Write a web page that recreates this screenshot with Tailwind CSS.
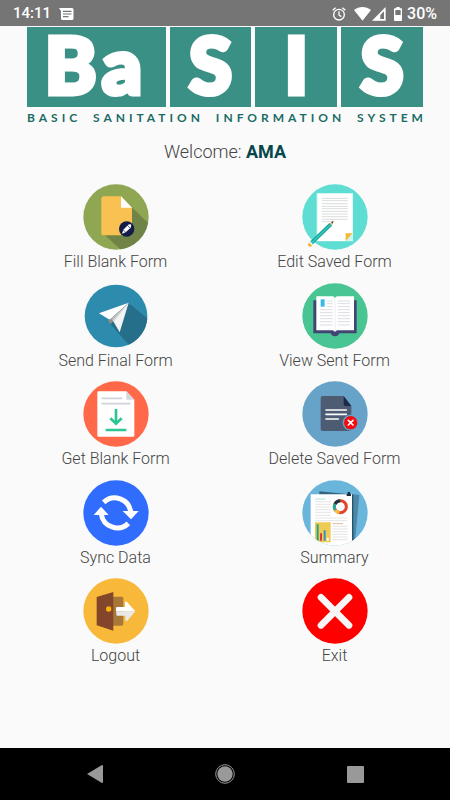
<!DOCTYPE html>
<html lang="en">
<head>
<meta charset="utf-8">
<meta name="viewport" content="width=device-width, initial-scale=1">
<title>BaSIS</title>
<script src="https://cdn.jsdelivr.net/npm/@tailwindcss/browser@4"></script>
</head>
<body class="min-h-screen flex flex-col bg-[#fafafa] font-[Roboto,sans-serif] text-[#444]">
<header class="h-[26px] shrink-0 bg-[#757575] text-white flex items-center justify-between px-[13px] pt-px font-medium">
  <div class="flex items-center gap-2">
    <time class="text-[15px]">14:11</time>
    <svg class="w-[15px] h-3" viewBox="0 0 15 12" aria-label="Message"><path fill="#fff" d="M0 0h13a1.500 1.500 0 0 1 1.500 1.500v9A1.500 1.500 0 0 1 13 12H3.500A1.500 1.500 0 0 1 2 10.500V3z"/><path stroke="#757575" stroke-width="1.200" d="M4 3.300h8.500M4 6h8.500M4 8.700h5.500"/></svg>
  </div>
  <div class="flex items-center">
    <svg class="w-[14px] h-[14px]" viewBox="0 0 42 42" fill="none" stroke="#fff" stroke-width="4" aria-label="Alarm"><circle cx="21" cy="23" r="16"/><path d="M21 13v11l7 5M2 10l9-8M40 10l-9-8"/></svg>
    <svg class="ml-2 w-[17px] h-[14px]" viewBox="0 0 51 42" aria-label="Wi-Fi"><path fill="#fff" d="M0 9C15-3 36-3 51 9L25.500 41z"/></svg>
    <svg class="ml-px w-[14px] h-[14px]" viewBox="0 0 42 42" aria-label="Signal"><path fill="#fff" fill-rule="evenodd" d="M41 0v41H0zM36 13L24 25v11h12z"/><path fill="#fff" d="M8 36L25 20v20H8z"/></svg>
    <svg class="ml-2 w-2 h-[14px]" viewBox="0 0 24 42" aria-label="Battery"><path fill="#fff" fill-rule="evenodd" d="M7 0h10v4h5a2 2 0 0 1 2 2v34a2 2 0 0 1-2 2H2a2 2 0 0 1-2-2V6a2 2 0 0 1 2-2h5zM4 9v15h16V9z"/></svg>
    <span class="ml-[5px] text-base">30%</span>
  </div>
</header>

<main class="flex-1 flex flex-col">
  <h1 class="mx-[27px] mt-px font-[Lato,sans-serif]">
    <span class="flex gap-1 text-center text-[78px] leading-[74px] font-black text-white [-webkit-text-stroke:5px_white] [stroke-linejoin:round]">
      <span class="h-20 grow-[139] basis-0 bg-[#3b9086] tracking-[6px]">Ba</span>
      <span class="h-20 grow-[82] basis-0 bg-[#3b9086]">S</span>
      <span class="h-20 grow-[82] basis-0 bg-[#3b9086]">I</span>
      <span class="h-20 grow-[82] basis-0 bg-[#3b9086]">S</span>
    </span>
    <span class="flex justify-between -mr-1 mt-[3px] text-xs leading-4 font-bold tracking-[4px] text-[#1b6b66]">
      <span>BASIC</span> <span>SANITATION</span> <span>INFORMATION</span> <span>SYSTEM</span>
    </span>
  </h1>
  <p class="mt-[14px] text-center text-lg leading-6 font-light">Welcome: <b class="font-bold text-[#06474c]">AMA</b></p>

  <nav class="flex-1 mt-5 pb-[71px] px-[6px] grid grid-cols-2 grid-rows-5 text-base leading-6 font-light">
    <button class="flex flex-col items-center">
      <svg class="size-[66px]" viewBox="98 29 198 198"><circle cx="197" cy="128" r="98" fill="#8fa653"/><path fill="#6f8446" d="M163 182L244 99l49 46a98 98 0 0 1-83 80z"/><path fill="#f9c151" d="M161 66h51l33 34v83h-84a8 8 0 0 1-8-8V74a8 8 0 0 1 8-8z"/><path fill="#fff" d="M212 66l33 34h-33z"/><circle cx="229" cy="164" r="23" fill="#131b49"/><path fill="#fff" d="M215 178l4-12 15-15 6-2 3 4-2 7-15 14z"/><path stroke="#131b49" stroke-width="2" d="M231 153l8 8M219 167l6 6"/></svg>
      Fill Blank Form
    </button>
    <button class="flex flex-col items-center">
      <svg class="size-[66px]" viewBox="94 27 198 198"><circle cx="193" cy="126" r="98" fill="#5eddd3"/><path fill="#d3f5f2" d="M138 54h109v145H138z"/><path fill="#fff" d="M141 57h104v117l-21 24h-83z"/><path fill="#f7c33c" d="M225 175h20l-20 23z"/><path fill="#e0a92e" d="M225 198v-23l21 0z" opacity=".35"/><path stroke="#dadcdd" stroke-width="3" d="M153 70h78M153 77h78M153 86h78M153 94h78M153 101h78M153 109h78M153 117h78M153 125h78M153 133h78M153 140h34"/><path fill="#e8bd7e" d="M175 146l14-9-6 17z"/><path fill="#333" d="M182 142l7-5-4 9z"/><path fill="#14a69c" d="M117 201l59-57 8 8-59 57z"/><path fill="#44cfc4" d="M120 204l59-57 2 2-59 58z"/><path fill="#e9f5f3" d="M115 203l4-4 8 9-4 4z"/><path fill="#f4b52e" d="M112 207l4-4 8 9-4 3q-8 1-8-8z"/></svg>
      Edit Saved Form
    </button>
    <button class="flex flex-col items-center">
      <svg class="size-[66px]" viewBox="98 24 198 198"><circle cx="197" cy="123" r="94" fill="#2d8bad"/><path fill="#256f8b" d="M234 83l57 47a94 94 0 0 1-56 79L172 138z"/><path fill="#fff" d="M146 115l89-32-57 51z"/><path fill="#b9b9b9" d="M178 134l57-51-47 54-8 9-7-10z"/><path fill="#8c8c8c" d="M172 134l13-1 3 4-6 11z"/><path fill="#f4f4f4" d="M235 83l-27 89-21-36z"/><path fill="#d5d5d5" d="M235 83l-48 53 3 5z"/></svg>
      Send Final Form
    </button>
    <button class="flex flex-col items-center">
      <svg class="size-[66px]" viewBox="94 23 198 198"><circle cx="193" cy="122" r="98" fill="#49c593"/><path fill="#424574" d="M128 75h130v99h-52q-3 9-13 9t-13-9h-52z"/><path fill="#fff" d="M137 63h49q5 0 7 6 2-6 7-6h50v102h-49q-5 0-8 5-3-5-8-5h-48z"/><path stroke="#e3e5ec" stroke-width="2" d="M193 70v97"/><path stroke="#c9cbd6" stroke-width="2" d="M168 77h18M168 85h18M168 94h18M148 103h38M148 112h38M148 121h38M148 130h38M148 139h38M148 149h38M201 77h37M201 85h37M201 94h37M201 103h37M201 112h37M201 121h37M201 130h37M201 139h37M201 149h37"/><path fill="#3ab8e8" d="M150 72h12v22h-12z"/></svg>
      View Sent Form
    </button>
    <button class="flex flex-col items-center">
      <svg class="size-[66px]" viewBox="98 23 198 198"><circle cx="197" cy="122" r="98" fill="#ff6949"/><path fill="#fff" d="M145 54h83l24 25v107a4 4 0 0 1-4 4H145a4 4 0 0 1-4-4V58a4 4 0 0 1 4-4z"/><path fill="#d5d7dd" d="M228 54l24 25h-24z"/><path stroke="#d0d3d9" stroke-width="5" stroke-linecap="round" d="M155 75h59M155 91h83"/><path fill="none" stroke="#2dc690" stroke-width="8" d="M197 107v43M180 135l17 16 17-16M166 170h62"/></svg>
      Get Blank Form
    </button>
    <button class="flex flex-col items-center">
      <svg class="size-[66px]" viewBox="94 21 198 198"><circle cx="193" cy="120" r="98" fill="#67a2c8"/><path fill="#4e5c73" d="M155 66h63l24 30v75h-87a5 5 0 0 1-5-5V71a5 5 0 0 1 5-5z"/><path fill="#1c2a47" d="M219 66l23 30h-18a5 5 0 0 1-5-5z"/><path stroke="#fff" stroke-width="5" stroke-linecap="round" d="M166 108h61M166 121h61M166 135h37"/><circle cx="240" cy="146" r="24" fill="#67a2c8"/><circle cx="240" cy="146" r="20" fill="#f60a12"/><path stroke="#fff" stroke-width="5" stroke-linecap="round" d="M233 139l14 14M247 139l-14 14"/></svg>
      Delete Saved Form
    </button>
    <button class="flex flex-col items-center">
      <svg class="size-[66px]" viewBox="98 24 198 198"><circle cx="197" cy="123" r="98" fill="#306cfe"/><path fill="none" stroke="#fff" stroke-width="15" d="M160 91A48 48 0 0 1 241 120M153 126A48 48 0 0 0 234 154"/><path fill="#fff" d="M217 117h48l-23 25zM130 129h45l-23-25z"/></svg>
      Sync Data
    </button>
    <button class="flex flex-col items-center">
      <svg class="size-[66px]" viewBox="94 23 198 198"><defs><clipPath id="disc"><circle cx="193" cy="122" r="98"/></clipPath></defs><g clip-path="url(#disc)"><path fill="#6ab5dc" d="M94 23h198v198H94z"/><path fill="#35647f" d="M146 57l90 9v10H146z"/><path fill="#4e86a3" d="M246 66l20 2-12 130-8 23z"/><path fill="#fff" d="M120 66h126v155H120z"/><path fill="#1f5672" d="M244 66h4v150h-4z"/><path fill="#1a2c3d" d="M228 64h3v-5h7v5h3v7h-13z"/><path stroke="#8ad6cb" stroke-width="2" d="M133 80h32"/><path stroke="#d8d8d8" stroke-width="2" d="M133 88h47M133 96h47M133 104h47M133 112h47M133 120h47M133 129h47M133 137h97M133 145h97M185 162h46M185 170h46M185 178h46M185 186h46M185 194h46M185 202h46"/><path stroke="#d98a80" stroke-width="2" d="M185 154h32"/><g fill="none" stroke-width="9"><circle cx="209" cy="103" r="18" stroke="#e2452d"/><path stroke="#1d3342" d="M193 95a18 18 0 0 1 16-10"/><path stroke="#23ab94" d="M194 113a18 18 0 0 1-1-18"/><path stroke="#f2bf38" d="M206 121a18 18 0 0 1-12-8"/></g><path fill="#eecb52" d="M133 150h47v60h-47z"/><path fill="#24a390" d="M138 156h6v49h-6z"/><path fill="#db3c33" d="M148 183h6v22h-6z"/><path fill="#3a92c5" d="M159 174h6v31h-6z"/><path fill="#fff" d="M168 196h6v9h-6z"/></g></svg>
      Summary
    </button>
    <button class="flex flex-col items-center">
      <svg class="size-[66px]" viewBox="98 25 198 198"><circle cx="197" cy="124" r="98" fill="#f8b93b"/><path fill="#a97838" d="M188 81h26q5 0 5 5v77q0 5-5 5h-26z"/><path fill="#84462b" d="M139 82l50-15v116l-50-16z"/><circle cx="175" cy="118" r="8" fill="#fbb20c"/><path fill="#fff" d="M199 112h25V98q2-5 6-1l25 28h-58v-11z"/><path fill="#e9e9e9" d="M197 125h58l-24 28q-5 2-6-2v-13h-26z"/></svg>
      Logout
    </button>
    <button class="flex flex-col items-center">
      <svg class="size-[66px]" viewBox="754 23 198 198"><circle cx="853" cy="122" r="98" fill="#fe0000"/><path stroke="#f7f7f7" stroke-width="20" stroke-linecap="round" d="M811 81l84 84M895 81l-84 84"/></svg>
      Exit
    </button>
  </nav>
</main>

<footer class="h-[52px] shrink-0 bg-black grid grid-cols-3 px-[30px] items-center justify-items-center">
  <button aria-label="Back"><svg class="w-4 h-[18px]" viewBox="0 0 16 18"><path fill="#999" d="M15 0q1 0 1 1v16q0 1-1 1L0 9z"/></svg></button>
  <button aria-label="Home"><svg class="size-5" viewBox="0 0 20 20"><circle cx="10" cy="10" r="9.300" fill="none" stroke="#999"/><circle cx="10" cy="10" r="7.700" fill="#999"/></svg></button>
  <button aria-label="Recent apps"><svg class="size-[17px]" viewBox="0 0 17 17"><rect width="17" height="17" rx="1" fill="#999"/></svg></button>
</footer>
</body>
</html>
